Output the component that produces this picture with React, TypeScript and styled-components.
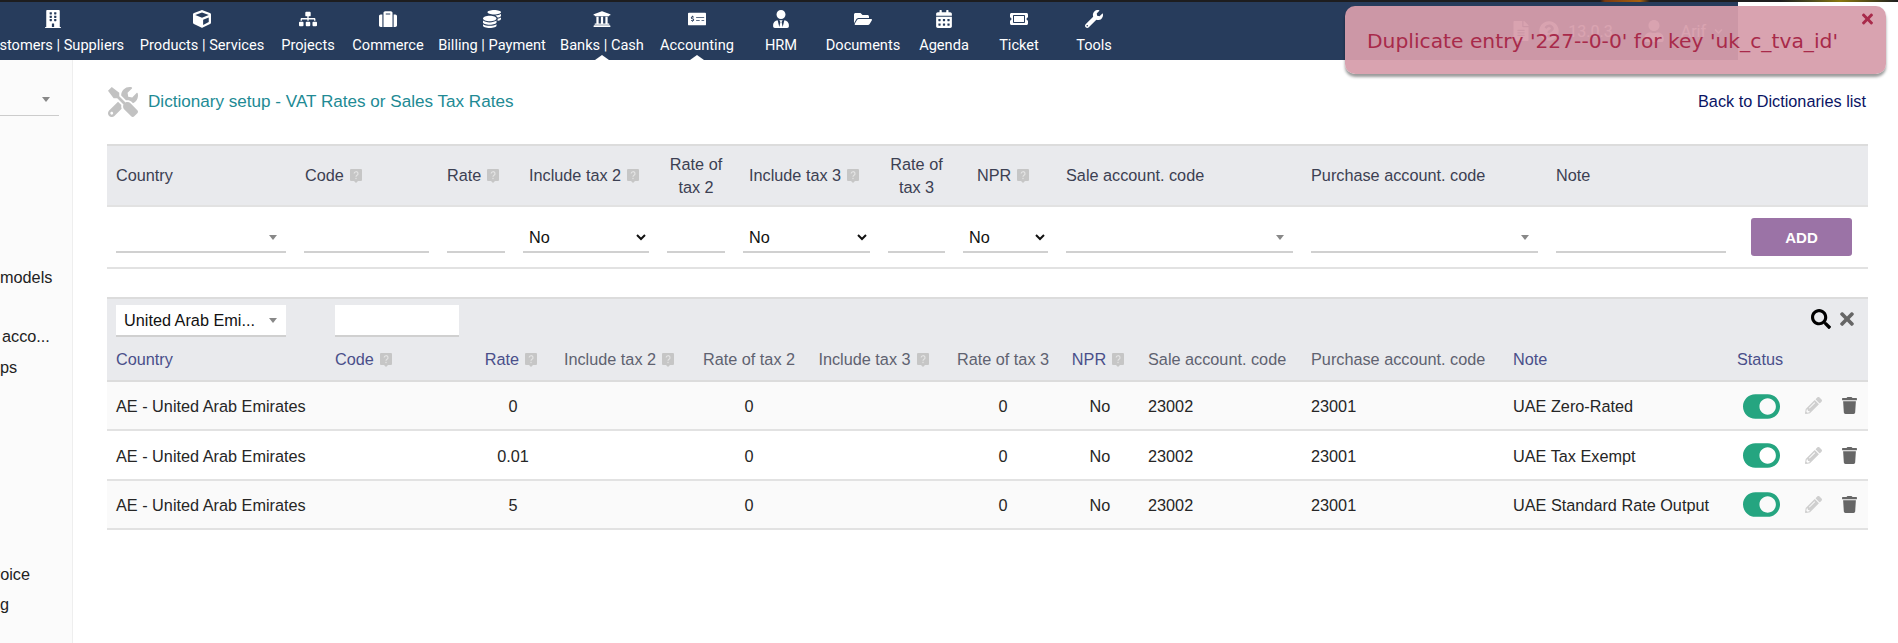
import React from "react";
import styled, { createGlobalStyle } from "styled-components";
import {
  FaBuilding, FaCube, FaSitemap, FaSuitcase, FaCoins, FaUniversity, FaMoneyCheckAlt, FaUserTie,
  FaFolderOpen, FaCalendarAlt, FaTicketAlt, FaWrench, FaTools, FaSearch, FaTimes, FaPencilAlt,
  FaTrash, FaToggleOn, FaFileAlt, FaQuestionCircle, FaChevronDown, FaUser,
} from "react-icons/fa";

const Global = createGlobalStyle`
  html, body { margin: 0; padding: 0; background: #fff; overflow: hidden; }
  body { font-family: "Liberation Sans", Arial, sans-serif; font-size: 16.25px; color: #262626; }
  * { box-sizing: border-box; }
`;

const Page = styled.div`
  position: relative; width: 1898px; height: 643px; overflow: hidden;
  display: flex; flex-direction: column;
`;
const TopStrip = styled.div`
  height: 2px; flex: none;
  background: linear-gradient(90deg, #1d1d1f 0, #1d1d1f 1600px, #7a3a10 1605px, #a5610f 1640px, #1d1d1f 1650px, #1d1d1f 1780px, #4a4a20 1810px, #8a7a10 1840px, #1d1d1f 1898px);
`;
const TopBar = styled.header`
  height: 58px; width: 1738px; flex: none; background: #273c5c; display: flex; align-items: stretch;
  font-family: Roboto, sans-serif; color: #fff; overflow: hidden;
`;
const Nav = styled.nav`display: flex; margin-left: -26px;`;
const NavItem = styled.div<{ $w: number; $marked?: boolean }>`
  position: relative; flex: none; width: ${p => p.$w}px; display: flex; flex-direction: column; align-items: center;
  white-space: nowrap; font-size: 14.6px; padding-top: 8px;
  svg { height: 18px; width: auto; display: block; margin-bottom: 8px; }
  ${p => p.$marked ? `&::after { content: ""; position: absolute; left: 50%; bottom: 0; margin-left: -7px;
    border-left: 7px solid transparent; border-right: 7px solid transparent; border-bottom: 5px solid #fff; }` : ""}
`;
const UserArea = styled.div`
  margin-left: auto; padding-right: 15px; display: flex; align-items: center; font-size: 16px; color: #fff;
  svg { display: block; }
`;
const UserGap = styled.span<{ $w: number }>`display: inline-block; width: ${p => p.$w}px;`;

const Toast = styled.div`
  position: absolute; left: 1345px; top: 6px; width: 541px; height: 68px; border-radius: 10px;
  background: rgba(215, 157, 171, 0.94); box-shadow: 0 3px 3px rgba(0,0,0,.4);
  color: #a82a4a; font-family: "DejaVu Sans", Verdana, sans-serif; font-size: 20.25px; padding: 23px 0 0 22px; white-space: nowrap;
`;
const ToastClose = styled(FaTimes)`
  position: absolute; right: 13px; top: 5px; width: 11px; height: 16px; color: #a82a4a;
`;

const Body = styled.div`display: flex; flex: 1; min-height: 0;`;
const Sidebar = styled.aside`
  width: 73px; flex: none; background: #fbfbfb; border-right: 1px solid #eee; overflow: hidden; padding-top: 55px;
`;
const SideSelect = styled.div`
  position: relative; width: 59px; height: 1px; background: #ccc; margin-bottom: 151px;
  &::after { content: ""; position: absolute; left: 42px; top: -18px;
    border-left: 4px solid transparent; border-right: 4px solid transparent; border-top: 5px solid #888; }
`;
const SideItem = styled.div<{ $top: number; $shift?: number }>`
  white-space: nowrap; line-height: 20px; margin-top: ${p => p.$top}px; margin-left: ${p => p.$shift || 0}px; color: #222;
`;

const Main = styled.main`flex: 1; min-width: 0; padding: 24px 30px 0 34px; display: flex; flex-direction: column;`;
const TitleRow = styled.div`display: flex; align-items: center; height: 36px; margin-bottom: 24px;`;
const TitleIcon = styled(FaTools)`width: 30px; height: 30px; color: #c2c2c2; flex: none; margin: 0 10px 0 1px;`;
const Title = styled.div`color: #218a94; font-size: 17.1px;`;
const BackLink = styled.div`margin-left: auto; padding: 0 2px 2px 0; color: #0a1464;`;

const topCols = "188px 143px 76px 144px 76px 145px 75px 103px 245px 245px 188px 133px";
const listCols = "219px 154px 66px 148px 110px 141px 116px 78px 163px 202px 224px 68px 72px";

const AddHead = styled.div`
  display: grid; grid-template-columns: ${topCols}; height: 63px; background: #e9eaed;
  border-top: 2px solid #dcdcdc; border-bottom: 2px solid #e2e2e2; align-items: center; color: #3c4052;
`;
const HeadCell = styled.div<{ $center?: boolean; $pad?: number }>`
  padding: 0 9px 0 ${p => p.$pad ?? 9}px; line-height: 23px; display: flex; align-items: center;
  ${p => p.$center ? "text-align: center; justify-content: center;" : ""}
`;
const AddRow = styled.div`
  display: grid; grid-template-columns: ${topCols}; height: 62px; border-bottom: 2px solid #e2e2e2; align-items: start; padding-top: 9px;
`;
const InputCell = styled.div`padding: 0 9px;`;
const Field = styled.div`height: 37px; border-bottom: 2px solid #d0d0d0;`;
const Combo = styled.div<{ $filter?: boolean }>`
  position: relative; height: ${p => p.$filter ? 32 : 37}px; border-bottom: 2px solid #d0d0d0;
  background: ${p => p.$filter ? "#fff" : "transparent"}; padding-left: 8px; line-height: 30px; color: #111;
  white-space: nowrap; overflow: hidden;
  &::after { content: ""; position: absolute; right: 9px; top: ${p => p.$filter ? 13 : 19}px;
    border-left: 4px solid transparent; border-right: 4px solid transparent; border-top: 5px solid #888; }
`;
const NativeSelect = styled.select`
  display: block; width: 100%; height: 31px; margin-top: 6px; border: none; border-bottom: 2px solid #d0d0d0; background: transparent;
  font-family: "Liberation Sans", Arial, sans-serif; font-size: 16.25px; color: #111; outline: none; padding: 0 0 0 2px;
`;
const AddButton = styled.button`
  width: 101px; height: 38px; margin-left: 16px; margin-top: 2px; border: none; border-radius: 3px; background: #9b73a6;
  color: #fff; font-family: "Liberation Sans", Arial, sans-serif; font-weight: 700; font-size: 15px;
`;
const ListBox = styled.div`margin-top: 28px;`;
const FilterBand = styled.div`
  position: relative; background: #e9eaed; border-top: 2px solid #dcdcdc; height: 85px; border-bottom: 2px solid #dcdcdc;
`;
const FilterInputs = styled.div`display: flex; padding: 6px 0 0 9px; height: 44px;`;
const FilterBox = styled.div<{ $w: number; $gap?: number }>`width: ${p => p.$w}px; margin-right: ${p => p.$gap || 0}px; flex: none;`;
const FilterInput = styled.div`height: 32px; background: #fff; border-bottom: 2px solid #d0d0d0;`;
const FilterIcons = styled.div`
  position: absolute; right: 14px; top: 10px; display: flex; align-items: center; gap: 9px;
`;
const SearchIcon = styled(FaSearch)`width: 20px; height: 20px; color: #000;`;
const ClearIcon = styled(FaTimes)`width: 14px; height: 20px; color: #666;`;
const ListHead = styled.div`display: grid; grid-template-columns: ${listCols}; height: 33px; align-items: center;`;
const ListHeadCell = styled.div<{ $sort?: boolean; $center?: boolean; $nudge?: number }>`
  padding: 0 ${p => p.$center ? p.$nudge || 0 : 9}px 0 ${p => p.$center ? 0 : 9}px; display: flex; align-items: center; white-space: nowrap;
  color: ${p => p.$sort ? "#4a4f8a" : "#5f6270"};
  ${p => p.$center ? "justify-content: center;" : ""}
`;
const Row = styled.div<{ $odd?: boolean }>`
  display: grid; grid-template-columns: ${listCols}; height: 49.4px; align-items: center;
  background: ${p => p.$odd ? "#fafafa" : "#fff"}; border-bottom: 2px solid #e2e2e2;
`;
const Cell = styled.div<{ $center?: boolean }>`
  padding: 2px ${p => p.$center ? 0 : 9}px 0; white-space: nowrap; color: #262626;
  text-align: ${p => p.$center ? "center" : "left"};
`;
const ToggleCell = styled.div`padding: 1px 0 0 15px; display: flex; align-items: center;`;
const Toggle = styled(FaToggleOn)`width: 37px; height: 33px; color: #25a580;`;
const Actions = styled.div`display: flex; align-items: center; padding-left: 9px; gap: 20px;`;
const EditIcon = styled(FaPencilAlt)`width: 17px; height: 17px; color: #cfcfcf;`;
const TrashIcon = styled(FaTrash)`width: 15px; height: 17px; color: #666;`;

const HelpSvg = styled.svg`width: 12px; height: 15px; margin-left: 6px; flex: none; margin-top: 2px;`;
const Help = () => (
  <HelpSvg viewBox="0 0 12 15">
    <path d="M1 0h10a1 1 0 0 1 1 1v10a1 1 0 0 1-1 1H8l-2 2-2-2H1a1 1 0 0 1-1-1V1a1 1 0 0 1 1-1z" fill="#c6c6c6" />
    <path d="M4.2 4.6a1.9 1.9 0 1 1 2.8 1.7c-.7.4-1 .8-1 1.5" fill="none" stroke="#e4e4e4" strokeWidth="1.2" />
    <rect x="5.4" y="8.8" width="1.2" height="1.3" fill="#e4e4e4" />
  </HelpSvg>
);

const navItems = [
  { w: 158, label: "Customers | Suppliers", Icon: FaBuilding },
  { w: 140, label: "Products | Services", Icon: FaCube },
  { w: 72, label: "Projects", Icon: FaSitemap },
  { w: 88, label: "Commerce", Icon: FaSuitcase },
  { w: 120, label: "Billing | Payment", Icon: FaCoins },
  { w: 100, label: "Banks | Cash", Icon: FaUniversity, marked: true },
  { w: 90, label: "Accounting", Icon: FaMoneyCheckAlt, marked: true },
  { w: 78, label: "HRM", Icon: FaUserTie },
  { w: 86, label: "Documents", Icon: FaFolderOpen },
  { w: 76, label: "Agenda", Icon: FaCalendarAlt },
  { w: 74, label: "Ticket", Icon: FaTicketAlt },
  { w: 76, label: "Tools", Icon: FaWrench },
];

const rows = [
  { rate: "0", note: "UAE Zero-Rated", odd: true },
  { rate: "0.01", note: "UAE Tax Exempt", odd: false },
  { rate: "5", note: "UAE Standard Rate Output", odd: true },
];

export default function App() {
  return (
    <Page>
      <Global />
      <TopStrip />
      <TopBar>
        <Nav>
          {navItems.map(({ w, label, Icon, marked }) => (
            <NavItem key={label} $w={w} $marked={marked}>
              <Icon />
              {label}
            </NavItem>
          ))}
        </Nav>
        <UserArea>
          <FaFileAlt size={20} />
          <UserGap $w={8} />
          <FaQuestionCircle size={20} />
          <UserGap $w={9} />
          13.0.3
          <UserGap $w={30} />
          <FaUser size={22} />
          <UserGap $w={16} />
          Arif
          <UserGap $w={8} />
          <FaChevronDown size={9} />
        </UserArea>
      </TopBar>
      <Body>
        <Sidebar>
          <SideSelect />
          <SideItem $top={0}>models</SideItem>
          <SideItem $top={39} $shift={2}>acco...</SideItem>
          <SideItem $top={11}>ps</SideItem>
          <SideItem $top={187} $shift={-8}>voice</SideItem>
          <SideItem $top={10}>g</SideItem>
        </Sidebar>
        <Main>
          <TitleRow>
            <TitleIcon />
            <Title>Dictionary setup - VAT Rates or Sales Tax Rates</Title>
            <BackLink>Back to Dictionaries list</BackLink>
          </TitleRow>
          <AddHead>
            <HeadCell>Country</HeadCell>
            <HeadCell $pad={10}>Code<Help /></HeadCell>
            <HeadCell>Rate<Help /></HeadCell>
            <HeadCell $pad={15}>Include tax 2<Help /></HeadCell>
            <HeadCell $center>Rate of tax 2</HeadCell>
            <HeadCell $pad={15}>Include tax 3<Help /></HeadCell>
            <HeadCell $center>Rate of tax 3</HeadCell>
            <HeadCell $pad={23}>NPR<Help /></HeadCell>
            <HeadCell>Sale account. code</HeadCell>
            <HeadCell>Purchase account. code</HeadCell>
            <HeadCell>Note</HeadCell>
            <HeadCell />
          </AddHead>
          <AddRow>
            <InputCell><Combo /></InputCell>
            <InputCell><Field /></InputCell>
            <InputCell><Field /></InputCell>
            <InputCell><NativeSelect defaultValue="No"><option>No</option><option>Yes</option></NativeSelect></InputCell>
            <InputCell><Field /></InputCell>
            <InputCell><NativeSelect defaultValue="No"><option>No</option><option>Yes</option></NativeSelect></InputCell>
            <InputCell><Field /></InputCell>
            <InputCell><NativeSelect defaultValue="No"><option>No</option><option>Yes</option></NativeSelect></InputCell>
            <InputCell><Combo /></InputCell>
            <InputCell><Combo /></InputCell>
            <InputCell><Field /></InputCell>
            <AddButton>ADD</AddButton>
          </AddRow>
          <ListBox>
            <FilterBand>
              <FilterInputs>
                <FilterBox $w={170} $gap={49}><Combo $filter>United Arab Emi...</Combo></FilterBox>
                <FilterBox $w={124}><FilterInput /></FilterBox>
              </FilterInputs>
              <FilterIcons><SearchIcon /><ClearIcon /></FilterIcons>
              <ListHead>
                <ListHeadCell $sort>Country</ListHeadCell>
                <ListHeadCell $sort>Code<Help /></ListHeadCell>
                <ListHeadCell $sort $center $nudge={4}>Rate<Help /></ListHeadCell>
                <ListHeadCell $center $nudge={2}>Include tax 2<Help /></ListHeadCell>
                <ListHeadCell $center>Rate of tax 2</ListHeadCell>
                <ListHeadCell $center $nudge={2}>Include tax 3<Help /></ListHeadCell>
                <ListHeadCell $center>Rate of tax 3</ListHeadCell>
                <ListHeadCell $sort $center $nudge={4}>NPR<Help /></ListHeadCell>
                <ListHeadCell>Sale account. code</ListHeadCell>
                <ListHeadCell>Purchase account. code</ListHeadCell>
                <ListHeadCell $sort>Note</ListHeadCell>
                <ListHeadCell $sort>Status</ListHeadCell>
                <ListHeadCell />
              </ListHead>
            </FilterBand>
            {rows.map(r => (
              <Row key={r.note} $odd={r.odd}>
                <Cell>AE - United Arab Emirates</Cell>
                <Cell />
                <Cell $center>{r.rate}</Cell>
                <Cell $center />
                <Cell $center>0</Cell>
                <Cell $center />
                <Cell $center>0</Cell>
                <Cell $center>No</Cell>
                <Cell>23002</Cell>
                <Cell>23001</Cell>
                <Cell>{r.note}</Cell>
                <ToggleCell><Toggle /></ToggleCell>
                <Actions><EditIcon /><TrashIcon /></Actions>
              </Row>
            ))}
          </ListBox>
        </Main>
      </Body>
      <Toast>
        Duplicate entry '227--0-0' for key 'uk_c_tva_id'
        <ToastClose />
      </Toast>
    </Page>
  );
}
